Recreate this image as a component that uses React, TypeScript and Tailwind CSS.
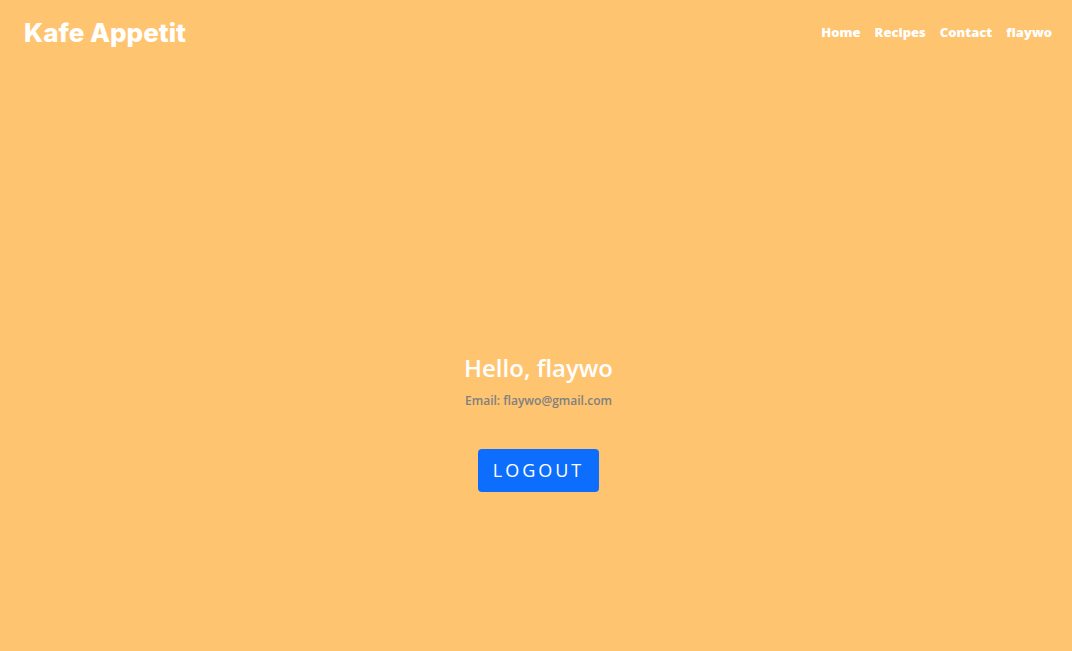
const links = ["Home", "Recipes", "Contact", "flaywo"];

export default function App() {
  return (
    <div className="flex min-h-screen flex-col bg-[#ffc470] font-['Open_Sans',sans-serif] text-white">
      <header className="flex items-center justify-between pt-[13px] pr-5 pl-6">
        <a href="#" className="font-['Inter',sans-serif] text-[26px] leading-10 font-extrabold">
          Kafe Appetit
        </a>
        <nav className="flex gap-[14px] text-[13px] font-extrabold">
          {links.map((label) => (
            <a key={label} href="#">
              {label}
            </a>
          ))}
        </nav>
      </header>
      <main className="flex grow flex-col items-center justify-center pt-[139px] pl-[5px]">
        <h1 className="text-2xl leading-8 font-semibold">Hello, flaywo</h1>
        <p className="mt-[7px] text-xs leading-5 font-semibold text-[#808080]">Email: flaywo@gmail.com</p>
        <button type="button" className="mt-[38px] rounded bg-[#0d6efd] px-[15px] py-2 text-lg leading-[27px] tracking-[3px]">
          LOGOUT
        </button>
      </main>
    </div>
  );
}
